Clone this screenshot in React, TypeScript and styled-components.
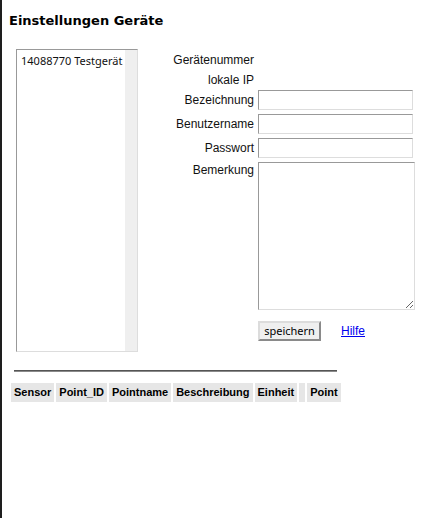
import React from "react";
import styled, { createGlobalStyle } from "styled-components";

const Global = createGlobalStyle`
  html, body { margin: 0; padding: 0; background: #fff; }
  body { font-family: "Liberation Sans", Arial, sans-serif; color: #000; }
`;

const Page = styled.div`
  min-height: 518px;
  box-sizing: border-box;
  border-left: 2px solid #1e1e1e;
  display: flex;
  flex-direction: column;
`;

const Title = styled.h1`
  margin: 12px 0 0 7px;
  font-family: "DejaVu Sans", sans-serif;
  font-weight: 700;
  font-size: 13px;
  line-height: 18px;
  color: #000;
`;

const Main = styled.div`
  display: flex;
  align-items: flex-start;
  margin: 19px 0 0 14px;
  gap: 12px;
`;

const ListBox = styled.div`
  width: 122px;
  height: 303px;
  box-sizing: border-box;
  border: 1px solid;
  border-color: #999 #ddd #ddd #999;
  display: flex;
`;

const ListItems = styled.div`
  flex: 1;
  padding: 3px 0 0 4px;
  font-family: "Noto Sans", sans-serif;
  font-size: 11px;
  line-height: 15px;
  color: #111;
  white-space: nowrap;
  overflow: hidden;
`;

const Track = styled.div`
  width: 12px;
  background: #efefef;
`;

const Form = styled.div`
  margin-top: 1px;
  display: grid;
  grid-template-columns: 104px 157px;
  grid-template-rows: 20px 20px 24px 24px 24px 148px auto;
  column-gap: 4px;
`;

const Label = styled.div<{ $top?: boolean }>`
  font-size: 12px;
  line-height: ${(p) => (p.$top ? "14px" : "20px")};
  padding-top: ${(p) => (p.$top ? "1px" : "0")};
  text-align: right;
  white-space: nowrap;
  color: #111;
`;

const Value = styled.div``;

const Input = styled.input`
  box-sizing: border-box;
  width: 155px;
  height: 20px;
  margin: 0;
  border: 1px solid;
  border-color: #999 #ddd #ddd #999;
  padding: 1px 2px;
  font-size: 12px;
  outline: none;
`;

const Area = styled.textarea`
  box-sizing: border-box;
  width: 157px;
  height: 148px;
  margin: 0;
  border: 1px solid;
  border-color: #999 #ddd #ddd #999;
  padding: 2px;
  font-size: 12px;
  display: block;
  outline: none;
`;

const Actions = styled.div`
  grid-column: 2;
  margin-top: 11px;
  display: flex;
  align-items: center;
  gap: 20px;
`;

const Button = styled.button`
  box-sizing: border-box;
  width: 63px;
  height: 20px;
  margin: 0;
  padding: 0;
  background: #efefef;
  border: 2px solid;
  border-color: #dcdcdc #8a8a8a #8a8a8a #dcdcdc;
  font-family: "Noto Sans", sans-serif;
  font-size: 11px;
  line-height: 16px;
  color: #000;
`;

const Link = styled.a`
  font-size: 12px;
  color: #0000ee;
  text-decoration: underline;
`;

const Rule = styled.div`
  margin: 18px 0 0 12px;
  width: 323px;
  height: 2px;
  box-sizing: border-box;
  border-top: 1px solid #555;
  border-bottom: 1px solid #8a8a8a;
`;

const HeaderRow = styled.div`
  display: flex;
  gap: 2px;
  margin: 11px 0 0 9px;
`;

const HeaderCell = styled.div<{ $w?: number }>`
  height: 19px;
  box-sizing: border-box;
  padding: 0 3px;
  min-width: ${(p) => (p.$w ? `${p.$w}px` : "0")};
  background: #e6e6e6;
  font-weight: 700;
  font-size: 11px;
  line-height: 19px;
  white-space: nowrap;
`;

const headers = ["Sensor", "Point_ID", "Pointname", "Beschreibung", "Einheit", "", "Point"];

export default function App() {
  return (
    <>
      <Global />
      <Page>
        <Title>Einstellungen Geräte</Title>
        <Main>
          <ListBox>
            <ListItems>14088770 Testgerät</ListItems>
            <Track />
          </ListBox>
          <Form>
            <Label>Gerätenummer</Label>
            <Value />
            <Label>lokale IP</Label>
            <Value />
            <Label>Bezeichnung</Label>
            <Value>
              <Input />
            </Value>
            <Label>Benutzername</Label>
            <Value>
              <Input />
            </Value>
            <Label>Passwort</Label>
            <Value>
              <Input type="password" />
            </Value>
            <Label $top>Bemerkung</Label>
            <Value>
              <Area />
            </Value>
            <Actions>
              <Button>speichern</Button>
              <Link href="#">Hilfe</Link>
            </Actions>
          </Form>
        </Main>
        <Rule />
        <HeaderRow>
          {headers.map((h, i) => (
            <HeaderCell key={i} $w={h ? 0 : 6}>
              {h}
            </HeaderCell>
          ))}
        </HeaderRow>
      </Page>
    </>
  );
}
